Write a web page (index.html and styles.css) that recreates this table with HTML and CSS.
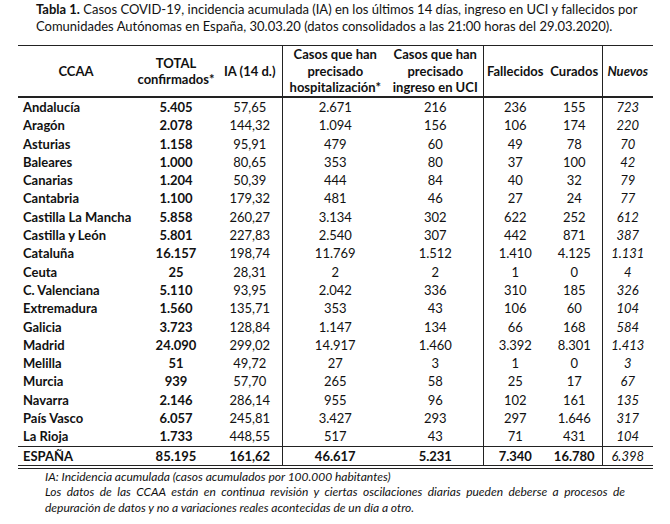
FILE: index.html
```html
<!DOCTYPE html>
<html>
  <head>
    <title>Tabla 1. Casos COVID-19 por Comunidades Autónomas</title>
    <meta charset="utf-8">
    <link rel="stylesheet" href="styles.css">
  </head>
  <body>
    <main>
      <p class="caption"><b>Tabla 1.</b> Casos COVID-19, incidencia acumulada (IA) en los últimos 14 días, ingreso en UCI y fallecidos por<br>Comunidades Autónomas en España, 30.03.20 (datos consolidados a las 21:00 horas del 29.03.2020).</p>

      <table class="data">
        <colgroup>
          <col class="c-name"><col class="c-total"><col class="c-ia"><col class="c-hosp">
          <col class="c-uci"><col class="c-fall"><col class="c-cur"><col class="c-new">
        </colgroup>
        <thead>
          <tr>
            <th>CCAA</th>
            <th>TOTAL<br>confirmados*</th>
            <th>IA (14 d.)</th>
            <th class="sep">Casos que han<br>precisado<br>hospitalización*</th>
            <th>Casos que han<br>precisado<br>ingreso en UCI</th>
            <th class="sep">Fallecidos</th>
            <th>Curados</th>
            <th class="sep new">Nuevos</th>
          </tr>
        </thead>
        <tbody>
          <tr><td>Andalucía</td><td>5.405</td><td>57,65</td><td>2.671</td><td>216</td><td>236</td><td>155</td><td>723</td></tr>
          <tr><td>Aragón</td><td>2.078</td><td>144,32</td><td>1.094</td><td>156</td><td>106</td><td>174</td><td>220</td></tr>
          <tr><td>Asturias</td><td>1.158</td><td>95,91</td><td>479</td><td>60</td><td>49</td><td>78</td><td>70</td></tr>
          <tr><td>Baleares</td><td>1.000</td><td>80,65</td><td>353</td><td>80</td><td>37</td><td>100</td><td>42</td></tr>
          <tr><td>Canarias</td><td>1.204</td><td>50,39</td><td>444</td><td>84</td><td>40</td><td>32</td><td>79</td></tr>
          <tr><td>Cantabria</td><td>1.100</td><td>179,32</td><td>481</td><td>46</td><td>27</td><td>24</td><td>77</td></tr>
          <tr><td>Castilla La Mancha</td><td>5.858</td><td>260,27</td><td>3.134</td><td>302</td><td>622</td><td>252</td><td>612</td></tr>
          <tr><td>Castilla y León</td><td>5.801</td><td>227,83</td><td>2.540</td><td>307</td><td>442</td><td>871</td><td>387</td></tr>
          <tr><td>Cataluña</td><td>16.157</td><td>198,74</td><td>11.769</td><td>1.512</td><td>1.410</td><td>4.125</td><td>1.131</td></tr>
          <tr><td>Ceuta</td><td>25</td><td>28,31</td><td>2</td><td>2</td><td>1</td><td>0</td><td>4</td></tr>
          <tr><td>C. Valenciana</td><td>5.110</td><td>93,95</td><td>2.042</td><td>336</td><td>310</td><td>185</td><td>326</td></tr>
          <tr><td>Extremadura</td><td>1.560</td><td>135,71</td><td>353</td><td>43</td><td>106</td><td>60</td><td>104</td></tr>
          <tr><td>Galicia</td><td>3.723</td><td>128,84</td><td>1.147</td><td>134</td><td>66</td><td>168</td><td>584</td></tr>
          <tr><td>Madrid</td><td>24.090</td><td>299,02</td><td>14.917</td><td>1.460</td><td>3.392</td><td>8.301</td><td>1.413</td></tr>
          <tr><td>Melilla</td><td>51</td><td>49,72</td><td>27</td><td>3</td><td>1</td><td>0</td><td>3</td></tr>
          <tr><td>Murcia</td><td>939</td><td>57,70</td><td>265</td><td>58</td><td>25</td><td>17</td><td>67</td></tr>
          <tr><td>Navarra</td><td>2.146</td><td>286,14</td><td>955</td><td>96</td><td>102</td><td>161</td><td>135</td></tr>
          <tr><td>País Vasco</td><td>6.057</td><td>245,81</td><td>3.427</td><td>293</td><td>297</td><td>1.646</td><td>317</td></tr>
          <tr><td>La Rioja</td><td>1.733</td><td>448,55</td><td>517</td><td>43</td><td>71</td><td>431</td><td>104</td></tr>
        </tbody>
        <tfoot>
          <tr><td>ESPAÑA</td><td>85.195</td><td>161,62</td><td>46.617</td><td>5.231</td><td>7.340</td><td>16.780</td><td>6.398</td></tr>
        </tfoot>
      </table>

      <div class="notes">
        <p>IA: Incidencia acumulada (casos acumulados por 100.000 habitantes)</p>
        <p class="full">Los datos de las CCAA están en continua revisión y ciertas oscilaciones diarias pueden deberse a procesos de</p>
        <p>depuración de datos y no a variaciones reales acontecidas de un día a otro.</p>
      </div>
    </main>
  </body>
</html>
```

FILE: styles.css
```css
html, body {
  margin: 0;
  background: #fff;
  color: #111;
  font-family: Lato, "Open Sans", sans-serif;
  font-size: 13px;
}
main {
  padding: 1px 17px 0 18px;
}
.caption {
  margin: 0 0 10px 18px;
  line-height: 17px;
}

/* table */
table.data {
  width: 635px;
  border-collapse: collapse;
  table-layout: fixed;
  border-top: 1px solid #222;
  border-bottom: 4px double #222;
}
col.c-name { width: 116px; }
col.c-total { width: 84px; }
col.c-ia { width: 64px; }
col.c-hosp { width: 106px; }
col.c-uci { width: 95px; }
col.c-fall { width: 64px; }
col.c-cur { width: 55px; }
col.c-new { width: 51px; }

th, td {
  padding: 0;
  text-align: center;
  white-space: nowrap;
}
th {
  height: 50px;
  line-height: 16.5px;
  font-weight: bold;
  border-bottom: 2px solid #222;
}
th.new {
  font-style: italic;
}
.sep,
td:nth-child(4),
td:nth-child(6),
td:nth-child(8) {
  border-left: 1px solid #222;
}
td {
  height: 18.3px;
  line-height: 18.3px;
}
td:first-child {
  text-align: left;
  padding-left: 5px;
}
td:first-child,
td:nth-child(2) {
  font-weight: bold;
}
td:nth-child(8) {
  font-style: italic;
}
tfoot td {
  border-top: 1px solid #222;
  font-weight: bold;
}
tfoot td:nth-child(8) {
  font-weight: normal;
}

/* notes */
.notes {
  width: 580px;
  margin: 0 0 0 27px;
  font-style: italic;
  font-size: 12px;
  line-height: 15.5px;
}
.notes p {
  margin: 0;
}
.notes p.full {
  text-align: justify;
  text-align-last: justify;
}
```
